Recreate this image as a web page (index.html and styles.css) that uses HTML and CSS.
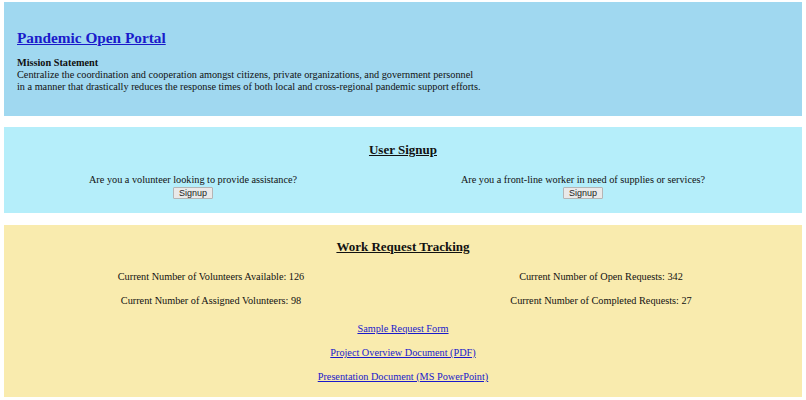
FILE: index.html
```html
<!DOCTYPE html>
<html>
<head>
<meta charset="utf-8">
<title>Pandemic Open Portal</title>
<link rel="stylesheet" href="styles.css">
</head>
<body>
<header class="hero">
  <h1 class="title"><a href="#">Pandemic Open Portal</a></h1>
  <p class="mission">
    <b>Mission Statement</b><br>
    Centralize the coordination and cooperation amongst citizens, private organizations, and government personnel<br>
    in a manner that drastically reduces the response times of both local and cross-regional pandemic support efforts.
  </p>
</header>

<section class="panel signup">
  <h2 class="panel-title">User Signup</h2>
  <div class="signup-grid">
    <div class="signup-col">
      <div class="question">Are you a volunteer looking to provide assistance?</div>
      <button class="btn">Signup</button>
    </div>
    <div class="signup-col">
      <div class="question">Are you a front-line worker in need of supplies or services?</div>
      <button class="btn">Signup</button>
    </div>
  </div>
</section>

<section class="panel tracking">
  <h2 class="panel-title">Work Request Tracking</h2>
  <div class="stats-grid">
    <div class="stat">Current Number of Volunteers Available: 126</div>
    <div class="stat">Current Number of Open Requests: 342</div>
    <div class="stat">Current Number of Assigned Volunteers: 98</div>
    <div class="stat">Current Number of Completed Requests: 27</div>
  </div>
  <div class="links">
    <a href="#">Sample Request Form</a>
    <a href="#">Project Overview Document (PDF)</a>
    <a href="#">Presentation Document (MS PowerPoint)</a>
  </div>
</section>
</body>
</html>
```

FILE: styles.css
```css
html, body {
  margin: 0;
  padding: 0;
  background: #ffffff;
}
body {
  padding: 2px 4px 0 4px;
  font-family: "Liberation Serif", "Times New Roman", serif;
  font-size: 10.25px;
  line-height: 12px;
  color: #111111;
}
a {
  color: #1a1acb;
}
.hero {
  background: #a0d8f0;
  padding: 26px 13px 23px 13px;
}
.title {
  margin: 0 0 9px 0;
  font-size: 15.3px;
  line-height: 20px;
  font-weight: bold;
}
.mission {
  margin: 0;
  line-height: 12px;
}
.panel {
  text-align: center;
  padding: 15px 0 14px 0;
}
.signup {
  background: #b5eefa;
  margin-top: 11px;
}
.tracking {
  background: #f9ebae;
  margin-top: 12px;
  padding-top: 14px;
}
.panel-title {
  margin: 0;
  font-size: 13px;
  line-height: 16px;
  font-weight: bold;
  text-decoration: underline;
}
.signup-grid {
  display: grid;
  grid-template-columns: 390px 390px;
  justify-content: center;
  padding-right: 30px;
  margin-top: 16px;
}
.signup-col {
  display: flex;
  flex-direction: column;
  align-items: center;
}
.btn {
  margin-top: 1px;
  font-family: "Liberation Sans", Arial, sans-serif;
  font-size: 9px;
  line-height: 10px;
  height: 12px;
  padding: 0 5px;
  background: #e9e9e9;
  border: 1px solid #b5b5b5;
  border-radius: 1px;
  color: #222;
}
.stats-grid {
  display: grid;
  grid-template-columns: 390px 390px;
  justify-content: center;
  padding-left: 6px;
  row-gap: 12px;
  margin-top: 16px;
}
.links {
  display: flex;
  flex-direction: column;
  align-items: center;
  gap: 12px;
  margin-top: 16px;
}
```
